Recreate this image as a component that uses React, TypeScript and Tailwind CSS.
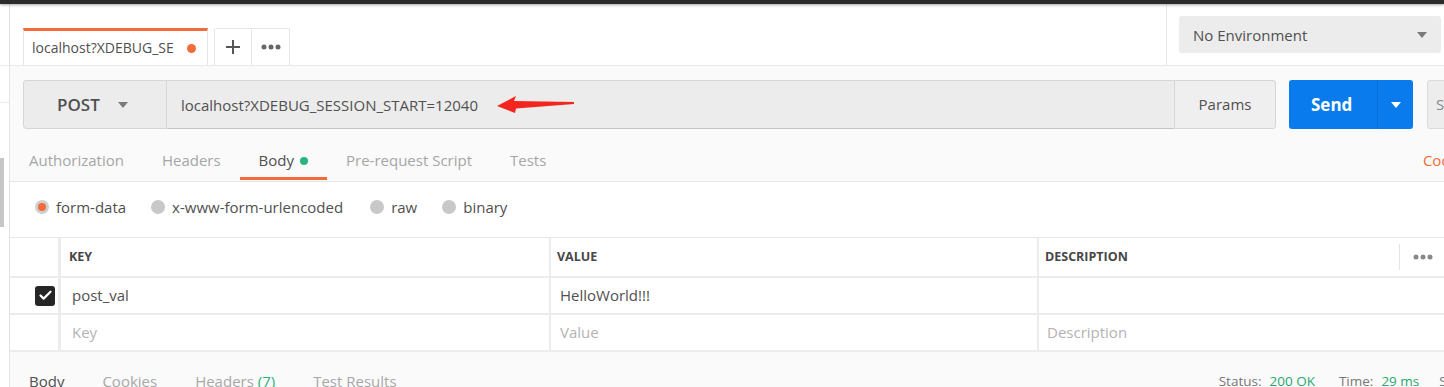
import { Check } from "lucide-react";

function Caret({ className = "" }: { className?: string }) {
  return (
    <svg width="10" height="6" viewBox="0 0 10 6" className={className}>
      <path d="M0 0h10L5 6z" fill="currentColor" />
    </svg>
  );
}

function Dots({ className = "" }: { className?: string }) {
  return (
    <svg width="20" height="6" viewBox="0 0 20 6" className={className}>
      <circle cx="3" cy="3" r="2.5" fill="currentColor" />
      <circle cx="10" cy="3" r="2.5" fill="currentColor" />
      <circle cx="17" cy="3" r="2.5" fill="currentColor" />
    </svg>
  );
}

function RedArrow() {
  return (
    <svg width="80" height="20" viewBox="0 0 80 20" className="shrink-0">
      <path d="M1 12 L20 2 L18 7 L78 8 L78 10 L20 14.5 L19 19 Z" fill="#f3251d" />
    </svg>
  );
}

const requestTabs = [
  { label: "Authorization" },
  { label: "Headers" },
  { label: "Body", active: true, dot: true },
  { label: "Pre-request Script" },
  { label: "Tests" },
];

const bodyModes = [
  { label: "form-data", checked: true, gap: "ml-0" },
  { label: "x-www-form-urlencoded", gap: "ml-[25px]" },
  { label: "raw", gap: "ml-[27px]" },
  { label: "binary", gap: "ml-[25px]" },
];

function Radio({ checked }: { checked?: boolean }) {
  return checked ? (
    <span className="flex h-[14px] w-[14px] items-center justify-center rounded-full bg-[#cfcfcf]">
      <span className="h-[8px] w-[8px] rounded-full bg-[#f26b3a]" />
    </span>
  ) : (
    <span className="h-[14px] w-[14px] rounded-full bg-[#c8c8c8]" />
  );
}

const cols = "grid grid-cols-[51px_490px_488px_1fr]";

export default function App() {
  return (
    <div className="relative h-[387px] w-[1444px] overflow-hidden bg-white font-['Open_Sans',sans-serif] text-[15px] text-[#505050]">
      <div className="relative z-10 h-[4px] bg-[#2b2b2b] shadow-[0_1px_3px_rgba(0,0,0,0.35)]" />
      <div className="flex h-[383px]">
        {/* sidebar edge */}
        <aside className="flex w-[10px] shrink-0 flex-col border-r border-[#e3e3e3] bg-white">
          <div className="h-[62px] shrink-0 border-b border-[#ececec]" />
          <div className="h-[37px] shrink-0 border-b border-[#ececec]" />
          <div className="mt-[55px] h-[69px] w-[4px] bg-[#c6c6c6]" />
        </aside>

        <main className="flex min-w-0 flex-1 flex-col">
          {/* tab bar */}
          <header className="flex h-[62px] shrink-0 border-b border-[#e8e8e8] bg-white">
            <div className="flex w-[1157px] shrink-0 items-end border-r border-[#e8e8e8] pl-[13px]">
              <div className="flex h-[37px] w-[185px] items-center border-x border-t-[3px] border-x-[#e6e6e6] border-t-[#f26b3a] bg-white pl-[8px] pr-[11px]">
                <span className="whitespace-nowrap text-[14px] leading-[20px]">localhost?XDEBUG_SE</span>
                <span className="ml-auto h-[9px] w-[9px] rounded-full bg-[#f26b3a]" />
              </div>
              <div className="ml-[6px] flex h-[37px] rounded-t-[2px] border border-b-0 border-[#e6e6e6] bg-white">
                <div className="flex w-[37px] items-center justify-center border-r border-[#e6e6e6]">
                  <svg width="14" height="14" viewBox="0 0 14 14">
                    <path d="M7 0v14M0 7h14" stroke="#555" strokeWidth="2" />
                  </svg>
                </div>
                <div className="flex w-[37px] items-center justify-center">
                  <Dots className="text-[#666]" />
                </div>
              </div>
            </div>
            <div className="flex-1 pl-[12px] pt-[12px]">
              <div className="flex h-[37px] w-[262px] items-center rounded-[3px] bg-[#ececec] pl-[14px] pr-[14px]">
                <span className="leading-[20px]">No Environment</span>
                <Caret className="ml-auto text-[#7a7a7a]" />
              </div>
            </div>
          </header>

          {/* request builder */}
          <section className="shrink-0 bg-[#fafafa]">
            <div className="ml-[13px] mt-[14px] flex h-[49px]">
              <div className="flex w-[144px] shrink-0 items-center rounded-l-[3px] border border-[#d6d6d6] bg-[#ececec] pl-[33px]">
                <span className="text-[17px] font-semibold leading-[22px]">POST</span>
                <Caret className="ml-[18px] text-[#7a7a7a]" />
              </div>
              <div className="flex w-[1007px] shrink-0 items-center border-y border-[#d6d6d6] border-b-[#c4c4c4] bg-[#ececec] pl-[14px]">
                <span className="leading-[20px]">localhost?XDEBUG_SESSION_START=12040</span>
                <span className="ml-[18px] mt-[-2px] flex">
                  <RedArrow />
                </span>
              </div>
              <div className="flex w-[102px] shrink-0 items-center justify-center rounded-r-[3px] border border-[#d6d6d6] bg-[#efefef]">
                Params
              </div>
              <div className="ml-[13px] flex w-[124px] shrink-0 overflow-hidden rounded-[3px] bg-[#097bed] text-white">
                <span className="flex flex-1 items-center pl-[22px] text-[17px] font-bold">Send</span>
                <span className="flex w-[36px] items-center justify-center border-l border-[#0a6fd6]">
                  <Caret className="text-white" />
                </span>
              </div>
              <div className="ml-[14px] flex w-[90px] shrink-0 items-center rounded-[3px] border border-[#dadada] bg-[#ededed] pl-[8px] text-[#888]">
                Save
              </div>
            </div>

            <nav className="mt-[11px] flex h-[42px] items-stretch border-b border-[#e6e6e6]">
              {requestTabs.map((t) => (
                <div key={t.label} className="relative flex items-center px-[19px]">
                  <span className={t.active ? "text-[#505050]" : "text-[#a6a6a6]"}>{t.label}</span>
                  {t.dot && <span className="ml-[6px] h-[8px] w-[8px] rounded-full bg-[#26b47f]" />}
                  {t.active && <span className="absolute bottom-[1px] left-0 right-0 h-[3px] bg-[#f26b3a]" />}
                </div>
              ))}
              <span className="ml-auto mr-[-15px] flex items-center text-[#f26b3a]">Code</span>
            </nav>
          </section>

          {/* body type */}
          <div className="flex h-[55px] shrink-0 items-center bg-white pb-[5px] pl-[25px]">
            {bodyModes.map((m) => (
              <label key={m.label} className={`flex items-center ${m.gap}`}>
                <Radio checked={m.checked} />
                <span className="ml-[7px] leading-[20px]">{m.label}</span>
              </label>
            ))}
          </div>

          {/* key value table */}
          <div className="shrink-0 border-t border-[#e8e8e8] bg-white">
            <div className={`${cols} h-[40px] border-b-2 border-[#ececec] text-[12.5px] font-bold text-[#474747]`}>
              <div className="border-r-[3px] border-[#ececec]" />
              <div className="flex items-center border-r-2 border-[#ececec] pl-[8px]">KEY</div>
              <div className="flex items-center border-r-2 border-[#ececec] pl-[6px]">VALUE</div>
              <div className="flex items-center pl-[6px]">
                DESCRIPTION
                <span className="ml-auto mr-[11px] flex h-[26px] items-center border-l border-[#e4e4e4] pl-[13px]">
                  <Dots className="text-[#888]" />
                </span>
              </div>
            </div>
            <div className={`${cols} h-[37px] border-b-2 border-[#ececec]`}>
              <div className="flex items-center justify-end border-r-[3px] border-[#ececec] pr-[3px]">
                <span className="flex h-[20px] w-[20px] items-center justify-center rounded-[3px] bg-[#262626]">
                  <Check size={15} strokeWidth={3.5} className="text-white" />
                </span>
              </div>
              <div className="flex items-center border-r-2 border-[#ececec] pl-[11px]">post_val</div>
              <div className="flex items-center border-r-2 border-[#ececec] pl-[9px]">HelloWorld!!!</div>
              <div className="flex items-center pl-[8px]" />
            </div>
            <div className={`${cols} h-[37px] border-b-2 border-[#ececec] text-[#b3b3b3]`}>
              <div className="border-r-[3px] border-[#ececec]" />
              <div className="flex items-center border-r-2 border-[#ececec] pl-[11px]">Key</div>
              <div className="flex items-center border-r-2 border-[#ececec] pl-[9px]">Value</div>
              <div className="flex items-center pl-[8px]">Description</div>
            </div>
          </div>

          {/* response */}
          <div className="flex flex-1 bg-[#fafafa] pt-[19px]">
            <div className="flex h-[20px] items-center">
              <span className="px-[19px]">Body</span>
              <span className="px-[19px] text-[#a8a8a8]">Cookies</span>
              <span className="px-[19px] text-[#a8a8a8]">
                Headers <span className="text-[#26b47f]">(7)</span>
              </span>
              <span className="px-[19px] text-[#a8a8a8]">Test Results</span>
            </div>
            <div className="ml-auto mr-[-20px] flex h-[20px] items-center text-[13.5px] text-[#777]">
              <span>Status:</span>
              <span className="ml-[8px] text-[#27a86f]">200 OK</span>
              <span className="ml-[24px]">Time:</span>
              <span className="ml-[8px] text-[#27a86f]">29 ms</span>
              <span className="ml-[20px]">Size</span>
            </div>
          </div>
        </main>
      </div>
    </div>
  );
}
